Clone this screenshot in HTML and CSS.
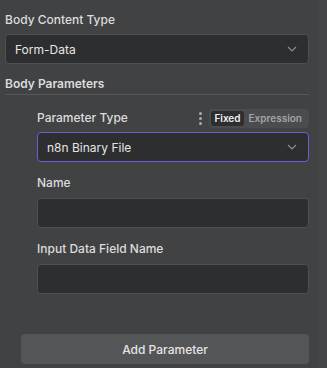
FILE: index.html
```html
<!DOCTYPE html>
<html lang="en">
<head>
  <meta charset="UTF-8">
  <title>Body Parameters</title>
  <meta name="viewport" content="width=device-width, initial-scale=1">
  <link rel="stylesheet" href="styles.css">
</head>
<body>
  <div class="panel">
    <div class="field">
      <label class="field-label">Body Content Type</label>
      <div class="select">
        <span>Form-Data</span>
        <svg class="chev" width="10" height="6" viewBox="0 0 10 6"><path d="M1 1l4 4 4-4" fill="none" stroke="currentColor" stroke-width="1.2"/></svg>
      </div>
    </div>

    <div class="section-title">Body Parameters</div>

    <div class="params">
      <div class="param-head">
        <label class="field-label">Parameter Type</label>
        <div class="head-tools">
          <span class="kebab"><i></i><i></i><i></i></span>
          <div class="toggle">
            <span class="toggle-opt active">Fixed</span>
            <span class="toggle-opt">Expression</span>
          </div>
        </div>
      </div>
      <div class="select focused">
        <span>n8n Binary File</span>
        <svg class="chev" width="10" height="6" viewBox="0 0 10 6"><path d="M1 1l4 4 4-4" fill="none" stroke="currentColor" stroke-width="1.2"/></svg>
      </div>

      <div class="field sub">
        <label class="field-label">Name</label>
        <div class="input"></div>
      </div>

      <div class="field sub">
        <label class="field-label">Input Data Field Name</label>
        <div class="input"></div>
      </div>
    </div>

    <button class="add-btn" type="button">Add Parameter</button>
  </div>
</body>
</html>
```

FILE: styles.css
```css
* {
  box-sizing: border-box;
}

body {
  margin: 0;
  background: linear-gradient(90deg, #414244 0, #414244 318px, #444547 318px);
  font-family: Inter, "Open Sans", sans-serif;
  color: #dcdcdd;
  height: 368px;
  overflow: hidden;
}

.panel {
  padding: 11px 18px 0 5px;
}

.field {
  display: flex;
  flex-direction: column;
  gap: 5px;
}

.field-label {
  font-size: 12px;
  font-weight: 500;
  line-height: 18px;
  color: #dcdcdd;
}

.select,
.input {
  height: 30px;
  border: 1px solid #4e4f52;
  border-radius: 4px;
  background: #2d2e2f;
}

.select {
  display: flex;
  align-items: center;
  justify-content: space-between;
  padding: 0 11px 0 9px;
  font-size: 12px;
  color: #e6e6e6;
}

.select.focused {
  border-color: #6a5ed8;
}

.chev {
  color: #8c8d90;
}

.section-title {
  margin-top: 11px;
  font-size: 12px;
  font-weight: 600;
  line-height: 18px;
  padding-bottom: 1px;
  border-bottom: 1px solid #56575a;
  color: #dcdcdd;
}

.params {
  padding: 13px 0 0 32px;
}

.param-head {
  display: flex;
  align-items: center;
  justify-content: space-between;
  height: 20px;
  margin-bottom: 4px;
}

.head-tools {
  display: flex;
  align-items: center;
  gap: 7px;
}

.kebab {
  display: flex;
  flex-direction: column;
  gap: 2px;
  width: 4px;
  align-items: center;
}

.kebab i {
  width: 3px;
  height: 3px;
  border-radius: 50%;
  background: #a9aaad;
}

.toggle {
  display: flex;
  align-items: center;
  height: 19px;
  padding: 2px 4px 2px 2px;
  gap: 2px;
  border-radius: 4px;
  background: #4b4c4f;
}

.toggle-opt {
  font-size: 10px;
  font-weight: 600;
  line-height: 15px;
  padding: 0 3px;
  color: #a3a4a7;
  border-radius: 3px;
}

.toggle-opt.active {
  background: #2d2e2f;
  color: #f0f0f0;
}

.field.sub {
  margin-top: 12px;
  gap: 6px;
}

.add-btn {
  display: block;
  width: calc(100% - 16px);
  margin: 40px 0 0 16px;
  height: 30px;
  border: none;
  border-radius: 4px;
  background: #545557;
  color: #e4e4e5;
  font-family: inherit;
  font-size: 12px;
  font-weight: 500;
}
```
